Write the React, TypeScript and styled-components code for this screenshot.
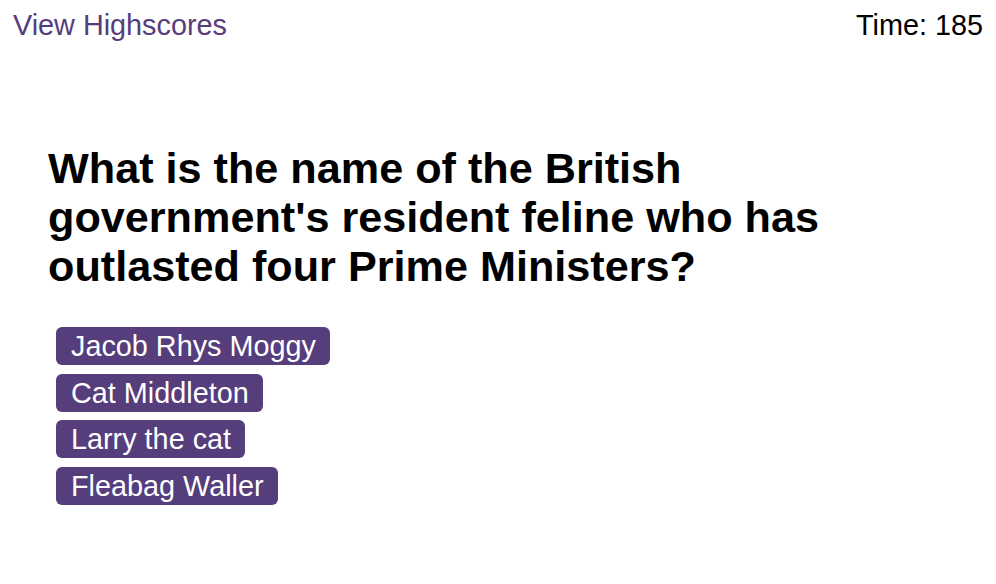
import React from "react";
import styled, { createGlobalStyle } from "styled-components";

const Global = createGlobalStyle`
  html, body { margin: 0; padding: 0; background: #fff; }
  body { font-family: "Liberation Sans", Arial, sans-serif; }
`;

const Page = styled.div`
  width: 996px;
  min-height: 584px;
  display: flex;
  flex-direction: column;
`;

const Header = styled.header`
  display: flex;
  justify-content: space-between;
  align-items: flex-start;
  padding: 9px 13px 0 13px;
  font-size: 28.8px;
  line-height: 33px;
`;

const HighscoreLink = styled.a`
  color: #563d7c;
  text-decoration: none;
  cursor: pointer;
`;

const Timer = styled.div`
  color: #000;
`;

const Main = styled.main`
  display: flex;
  flex-direction: column;
  padding: 102px 0 0 48px;
`;

const Question = styled.h2`
  margin: 0;
  width: 860px;
  font-size: 43.2px;
  line-height: 49px;
  font-weight: 700;
  color: #000;
`;

const Choices = styled.div`
  display: flex;
  flex-direction: column;
  align-items: flex-start;
  gap: 8.5px;
  margin: 36px 0 0 8px;
`;

const Choice = styled.button`
  font-family: "Liberation Sans", Arial, sans-serif;
  font-size: 28.8px;
  line-height: 34px;
  padding: 2px 14px 2px 15px;
  border: none;
  border-radius: 6px;
  background: #563d7c;
  color: #fff;
  cursor: pointer;
`;

const choices = ["Jacob Rhys Moggy", "Cat Middleton", "Larry the cat", "Fleabag Waller"];

export default function App() {
  return (
    <Page>
      <Global />
      <Header>
        <HighscoreLink>View Highscores</HighscoreLink>
        <Timer>Time: 185</Timer>
      </Header>
      <Main>
        <Question>
          What is the name of the British government's resident feline who has outlasted four Prime Ministers?
        </Question>
        <Choices>
          {choices.map((c) => (
            <Choice key={c}>{c}</Choice>
          ))}
        </Choices>
      </Main>
    </Page>
  );
}
